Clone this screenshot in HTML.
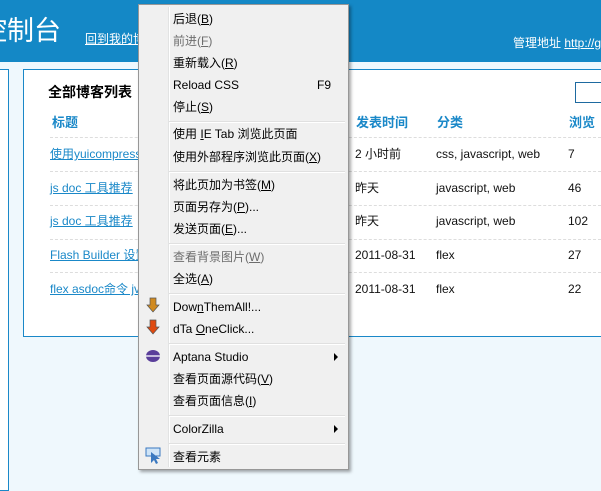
<html><head><style>
body{margin:0;width:601px;height:484px;overflow:hidden;background:#eff8fd;font-family:"Liberation Sans","Noto Sans CJK SC",sans-serif;position:relative}
.a{position:absolute;white-space:nowrap;line-height:16px}
.hdr{position:absolute;left:0;top:0;width:601px;height:62px;background:#1488c6}
.l{color:#1a88c8;text-decoration:underline;font-size:12px}
.c{font-size:12px;color:#111}
.th{color:#1a88c8;font-weight:bold;font-size:13px}
.dash{position:absolute;left:50px;width:551px;border-top:1px dashed #ddd}
.menu{position:absolute;left:138px;top:4px;width:209px;height:464px;background:#f0f0f0;border:1px solid #979797;box-shadow:2px 2px 3px rgba(0,0,0,.35)}
.vl{position:absolute;left:29px;top:2px;bottom:2px;border-left:1px solid #e2e3e3;border-right:1px solid #fff}
.mi{position:absolute;left:34px;font-size:12px;color:#000;white-space:nowrap;line-height:16px}
.dis{color:#6d6d6d}
.sep{position:absolute;left:30px;right:3px;border-top:1px solid #e0e0e0;border-bottom:1px solid #fff}
.arr{position:absolute;right:10px;width:0;height:0;border-left:4px solid #000;border-top:4px solid transparent;border-bottom:4px solid transparent}
</style></head><body>
<div class="hdr"></div>
<div class="a" style="left:-20px;top:14px;font-size:27px;line-height:34px;color:#fff">控制台</div>
<div class="a" style="left:85px;top:31px;font-size:12px;color:#fff;text-decoration:underline">回到我的博客</div>
<div class="a" style="left:513px;top:35px;font-size:12px;color:#fff">管理地址 <u>http://g</u></div>
<div style="position:absolute;left:-2px;top:69px;width:9px;height:420px;background:#fff;border:1px solid #1a88c8"></div>
<div style="position:absolute;left:23px;top:69px;width:590px;height:266px;background:#fff;border:1px solid #1a88c8"></div>
<div class="a" style="left:48px;top:84px;font-size:14px;font-weight:bold;color:#000">全部博客列表</div>
<div style="position:absolute;left:575px;top:82px;width:40px;height:19px;border:1px solid #1e6aa0"></div>
<div class="a th" style="left:52px;top:115px">标题</div>
<div class="a th" style="left:356px;top:115px">发表时间</div>
<div class="a th" style="left:437px;top:115px">分类</div>
<div class="a th" style="left:569px;top:115px">浏览</div>
<div class="dash" style="top:137px"></div><div class="dash" style="top:171px"></div><div class="dash" style="top:205px"></div><div class="dash" style="top:239px"></div><div class="dash" style="top:272px"></div>
<div class="a l" style="left:50px;top:146px">使用yuicompressor</div><div class="a c" style="left:355px;top:146px">2 小时前</div><div class="a c" style="left:436px;top:146px">css, javascript, web</div><div class="a c" style="left:568px;top:146px">7</div>
<div class="a l" style="left:50px;top:180px">js doc 工具推荐</div><div class="a c" style="left:355px;top:180px">昨天</div><div class="a c" style="left:436px;top:180px">javascript, web</div><div class="a c" style="left:568px;top:180px">46</div>
<div class="a l" style="left:50px;top:213px">js doc 工具推荐</div><div class="a c" style="left:355px;top:213px">昨天</div><div class="a c" style="left:436px;top:213px">javascript, web</div><div class="a c" style="left:568px;top:213px">102</div>
<div class="a l" style="left:50px;top:247px">Flash Builder 设置</div><div class="a c" style="left:355px;top:247px">2011-08-31</div><div class="a c" style="left:436px;top:247px">flex</div><div class="a c" style="left:568px;top:247px">27</div>
<div class="a l" style="left:50px;top:281px">flex asdoc命令 jvm</div><div class="a c" style="left:355px;top:281px">2011-08-31</div><div class="a c" style="left:436px;top:281px">flex</div><div class="a c" style="left:568px;top:281px">22</div>
<div class="menu">
<div class="vl"></div>
<div class="mi" style="top:6px">后退(<u>B</u>)</div>
<div class="mi dis" style="top:28px">前进(<u>F</u>)</div>
<div class="mi" style="top:50px">重新载入(<u>R</u>)</div>
<div class="mi" style="top:72px">Reload CSS</div><div class="mi" style="top:72px;left:178px">F9</div>
<div class="mi" style="top:94px">停止(<u>S</u>)</div>
<div class="sep" style="top:116px"></div>
<div class="mi" style="top:121px">使用 <u>I</u>E Tab 浏览此页面</div>
<div class="mi" style="top:144px">使用外部程序浏览此页面(<u>X</u>)</div>
<div class="sep" style="top:166px"></div>
<div class="mi" style="top:172px">将此页加为书签(<u>M</u>)</div>
<div class="mi" style="top:194px">页面另存为(<u>P</u>)...</div>
<div class="mi" style="top:216px">发送页面(<u>E</u>)...</div>
<div class="sep" style="top:238px"></div>
<div class="mi dis" style="top:244px">查看背景图片(<u>W</u>)</div>
<div class="mi" style="top:266px">全选(<u>A</u>)</div>
<div class="sep" style="top:288px"></div>
<div class="mi" style="top:294px">Dow<u>n</u>ThemAll!...</div>
<div class="mi" style="top:316px">dTa <u>O</u>neClick...</div>
<div class="sep" style="top:338px"></div>
<div class="mi" style="top:344px">Aptana Studio</div><div class="arr" style="top:348px"></div>
<div class="mi" style="top:366px">查看页面源代码(<u>V</u>)</div>
<div class="mi" style="top:388px">查看页面信息(<u>I</u>)</div>
<div class="sep" style="top:410px"></div>
<div class="mi" style="top:416px">ColorZilla</div><div class="arr" style="top:420px"></div>
<div class="sep" style="top:438px"></div>
<div class="mi" style="top:444px">查看元素</div>
<svg style="position:absolute;left:7px;top:292px" width="16" height="50"><path d="M4 1h6v7h3l-6 7-6-7h3z" fill="#d08a20" stroke="#555" stroke-width=".7"/><path d="M4 23h6v7h3l-6 7-6-7h3z" fill="#e04a10" stroke="#555" stroke-width=".7"/></svg>
<svg style="position:absolute;left:6px;top:344px" width="16" height="16"><ellipse cx="8" cy="7" rx="7" ry="6" fill="#5a3e9a"/><path d="M1 7h14" stroke="#fff" stroke-width="1.3"/></svg>
<svg style="position:absolute;left:6px;top:442px" width="18" height="18"><rect x="1" y="1" width="14" height="8" fill="#cfe4f7" stroke="#3a78c0"/><path d="M6 5l0 11 3-3 2 4 2-1-2-4 4 0z" fill="#3a78c0"/></svg>
</div>
</body></html>
